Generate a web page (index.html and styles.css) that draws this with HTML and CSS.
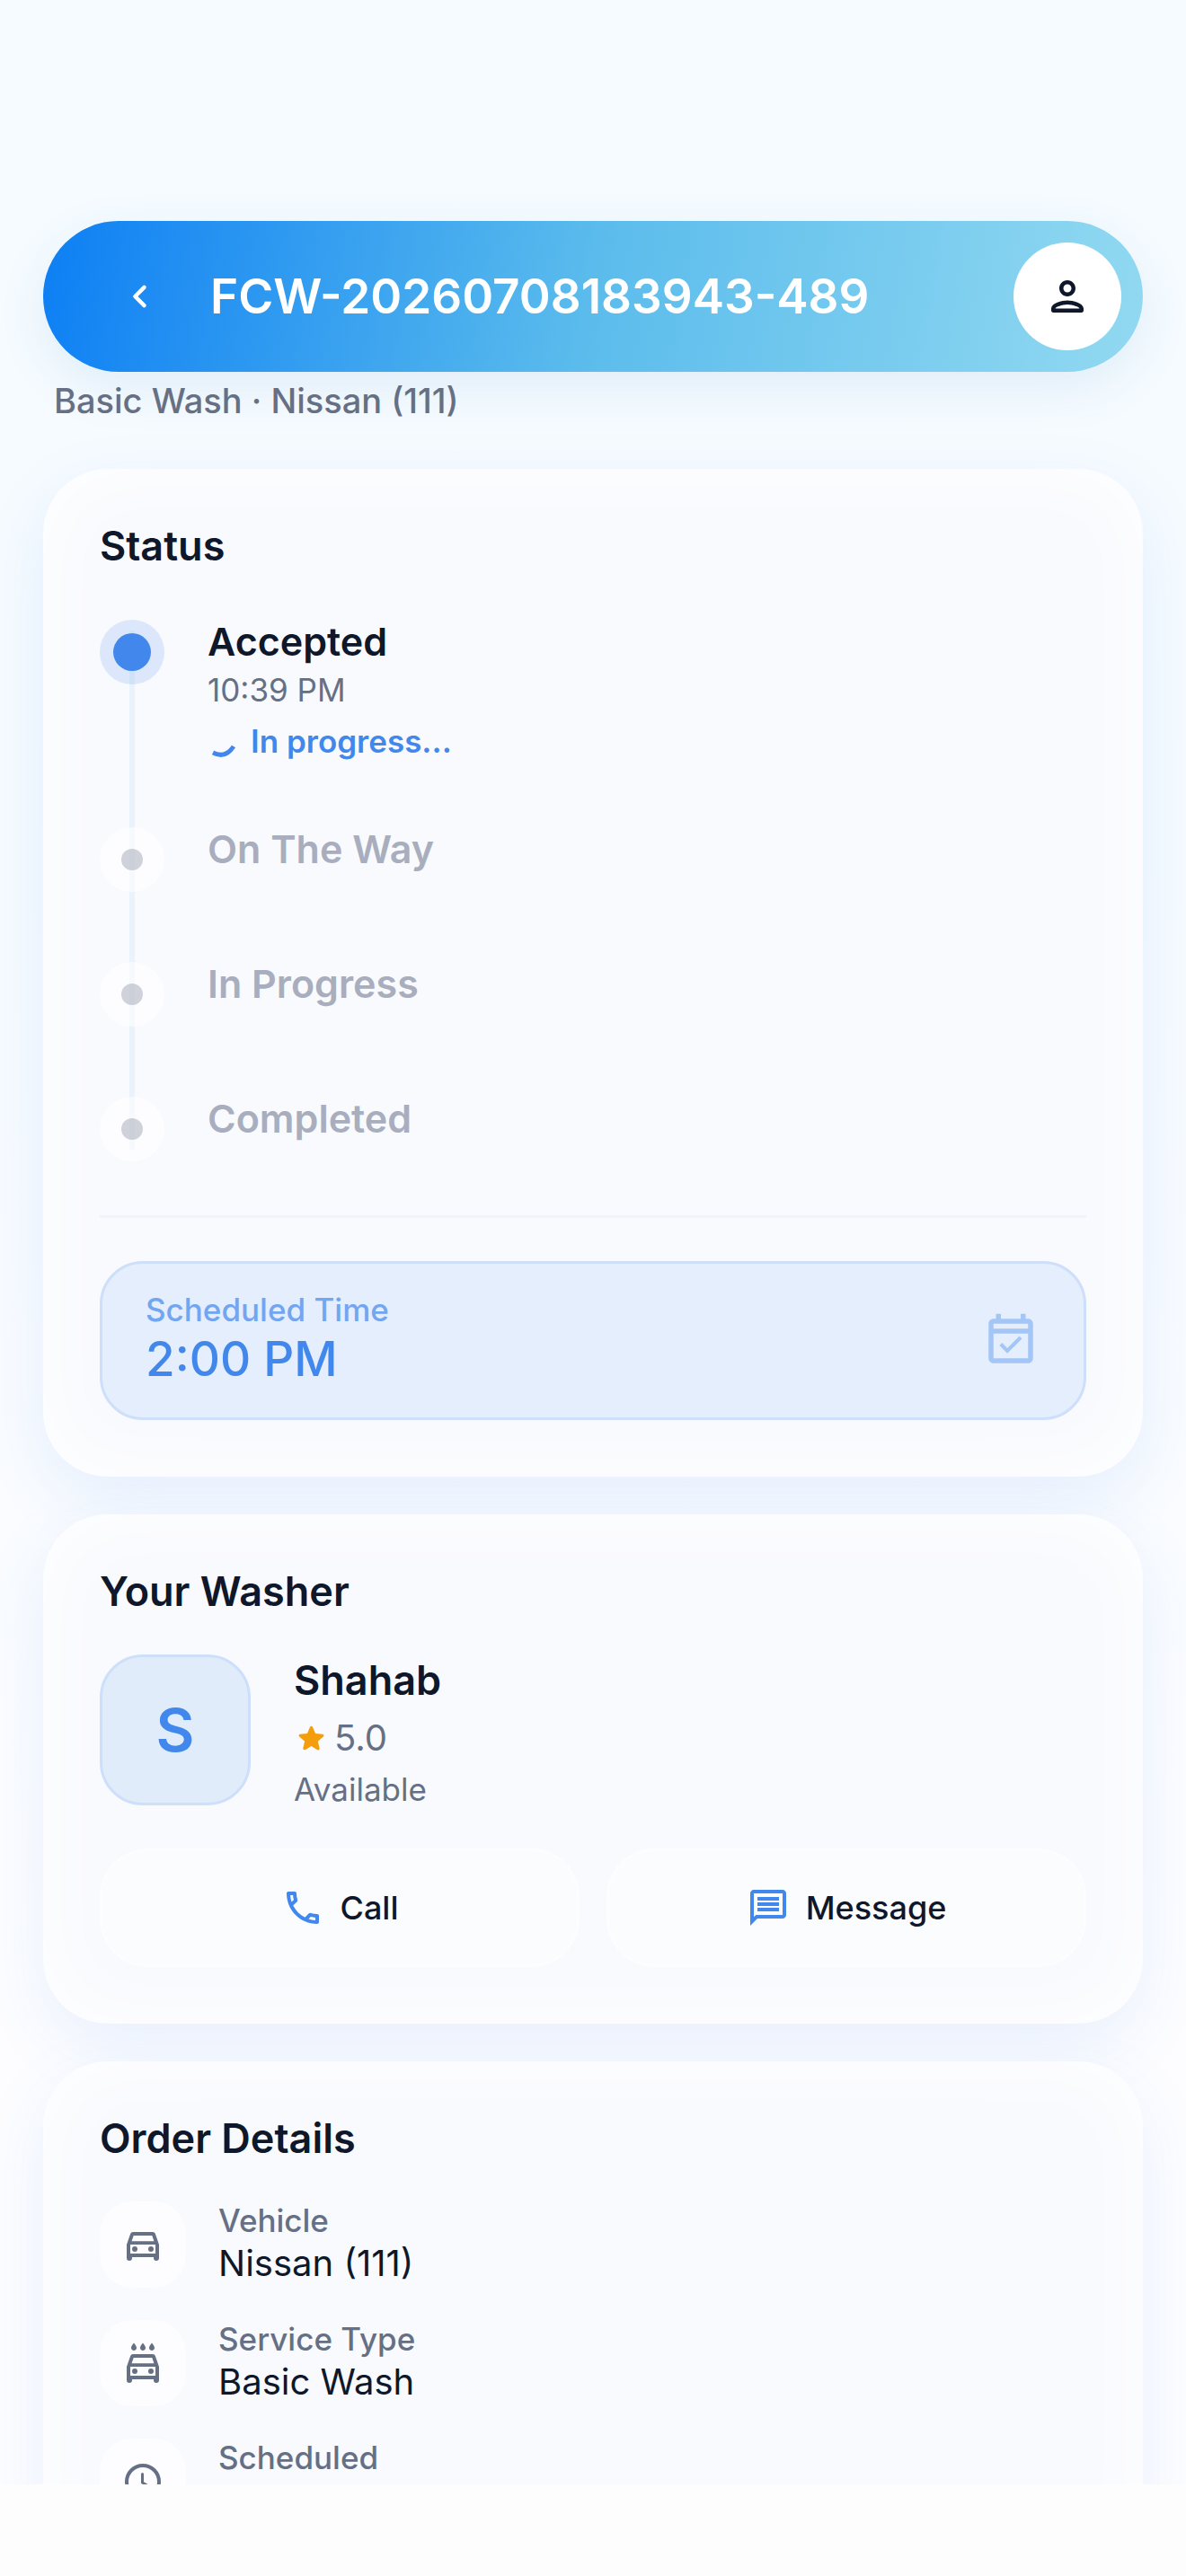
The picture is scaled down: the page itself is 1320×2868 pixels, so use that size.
FILE: index.html
```html
<!DOCTYPE html>
<html lang="en">
<head>
  <meta charset="UTF-8" />
  <meta name="viewport" content="width=device-width, initial-scale=1" />
  <title>FCW-20260708183943-489</title>
  <link rel="stylesheet" href="styles.css">
</head>
<body>

  <div class="screen">
    <!-- Header -->
    <header class="topbar">
      <button class="back-btn" type="button" aria-label="Back">
        <svg width="54" height="54" viewBox="0 0 24 24" fill="none" stroke="currentColor" stroke-width="2" stroke-linecap="round" stroke-linejoin="round"><path d="M14 7.5L9.5 12l4.500 4.500"/></svg>
      </button>
      <h1>FCW-20260708183943-489</h1>
      <button class="profile-btn" type="button" aria-label="Profile">
        <svg width="54" height="54" viewBox="0 0 24 24" fill="currentColor"><path d="M12 6c1.100 0 2 .9 2 2s-.9 2-2 2-2-.9-2-2 .9-2 2-2m0 10c2.700 0 5.800 1.290 6 2H6c.23-.72 3.310-2 6-2m0-12C9.790 4 8 5.790 8 8s1.790 4 4 4 4-1.790 4-4-1.790-4-4-4zm0 10c-2.670 0-8 1.340-8 4v1c0 .55.45 1 1 1h14c.55 0 1-.45 1-1v-1c0-2.660-5.330-4-8-4z"/></svg>
      </button>
    </header>
    <p class="subtitle">Basic Wash · Nissan (111)</p>

    <main>
      <!-- Status -->
      <section class="card">
        <h2>Status</h2>
        <ol class="timeline">
          <li class="step active">
            <span class="dot"></span>
            <div class="step-text">
              <h3>Accepted</h3>
              <time>10:39 PM</time>
              <p class="running">
                <svg width="36" height="36" viewBox="0 0 36 36" fill="none" stroke="currentColor" stroke-width="5"><path d="M6 31Q20 38 29 24"/></svg>
                In progress...
              </p>
            </div>
          </li>
          <li class="step">
            <span class="dot"></span>
            <h3>On The Way</h3>
          </li>
          <li class="step">
            <span class="dot"></span>
            <h3>In Progress</h3>
          </li>
          <li class="step">
            <span class="dot"></span>
            <h3>Completed</h3>
          </li>
        </ol>
        <hr>
        <div class="schedule">
          <div>
            <p class="schedule-label">Scheduled Time</p>
            <p class="schedule-time">2:00 PM</p>
          </div>
          <svg width="66" height="66" viewBox="0 0 24 24" fill="currentColor"><path d="M16.530 11.060L15.470 10l-4.880 4.880-2.120-2.120-1.060 1.060L10.590 17l5.940-5.940zM19 3h-1V1h-2v2H8V1H6v2H5c-1.110 0-1.990.9-1.990 2L3 19c0 1.100.89 2 2 2h14c1.100 0 2-.9 2-2V5c0-1.100-.9-2-2-2zm0 16H5V9h14v10zM5 7V5h14v2H5z"/></svg>
        </div>
      </section>

      <!-- Washer -->
      <section class="card">
        <h2>Your Washer</h2>
        <div class="washer">
          <div class="avatar">S</div>
          <div class="washer-info">
            <h3>Shahab</h3>
            <p class="rating">
              <svg width="39" height="39" viewBox="0 0 24 24" fill="currentColor"><path d="M12 17.270l4.150 2.510c.76.46 1.690-.22 1.490-1.080l-1.100-4.720 3.670-3.180c.67-.58.31-1.680-.57-1.750l-4.830-.41-1.890-4.460c-.34-.81-1.500-.81-1.840 0L9.190 8.630l-4.830.41c-.88.07-1.240 1.170-.57 1.750l3.670 3.180-1.100 4.720c-.2.86.73 1.540 1.490 1.080l4.150-2.500z"/></svg>
              5.0
            </p>
            <p class="availability">Available</p>
          </div>
        </div>
        <div class="actions">
          <button type="button">
            <svg width="48" height="48" viewBox="0 0 24 24" fill="currentColor"><path d="M6.540 5c.06.89.21 1.760.45 2.590l-1.200 1.200c-.41-1.200-.67-2.470-.76-3.790h1.510m9.860 12.020c.85.24 1.720.39 2.600.45v1.490c-1.320-.09-2.590-.35-3.800-.75l1.200-1.190M7.500 3H4c-.55 0-1 .45-1 1 0 9.390 7.610 17 17 17 .55 0 1-.45 1-1v-3.490c0-.55-.45-1-1-1-1.240 0-2.450-.2-3.570-.57-.1-.04-.21-.05-.31-.05-.26 0-.51.1-.71.29l-2.200 2.200c-2.830-1.450-5.150-3.760-6.590-6.590l2.200-2.200c.28-.28.36-.67.25-1.020C8.700 6.450 8.500 5.250 8.500 4c0-.55-.45-1-1-1z"/></svg>
            Call
          </button>
          <button type="button">
            <svg width="48" height="48" viewBox="0 0 24 24" fill="currentColor"><path d="M4 4h16v12H5.170L4 17.170V4m0-2c-1.100 0-1.990.9-1.990 2L2 22l4-4h14c1.100 0 2-.9 2-2V4c0-1.100-.9-2-2-2H4zm2 10h12v2H6v-2zm0-3h12v2H6V9zm0-3h12v2H6V6z"/></svg>
            Message
          </button>
        </div>
      </section>

      <!-- Order details -->
      <section class="card">
        <h2>Order Details</h2>
        <dl class="details">
          <div class="detail">
            <span class="detail-icon">
              <svg width="48" height="48" viewBox="0 0 24 24" fill="currentColor"><path d="M18.920 6.010C18.720 5.420 18.160 5 17.500 5h-11c-.66 0-1.210.42-1.420 1.010L3 12v7.500a1.500 1.500 0 0 0 3 0V19h12v.5a1.500 1.500 0 0 0 3 0V12l-2.080-5.990zM6.850 7h10.290l1.080 3.110H5.770L6.850 7zM19 17H5v-5h14v5z"/><circle cx="7.500" cy="14.500" r="1.500"/><circle cx="16.500" cy="14.500" r="1.500"/></svg>
            </span>
            <dt>Vehicle</dt>
            <dd>Nissan (111)</dd>
          </div>
          <div class="detail">
            <span class="detail-icon">
              <svg width="48" height="48" viewBox="0 0 24 24" fill="currentColor"><path d="M18.920 8.010C18.720 7.420 18.160 7 17.500 7h-11c-.66 0-1.210.42-1.420 1.010L3 14v7.500a1.500 1.500 0 0 0 3 0V21h12v.5a1.500 1.500 0 0 0 3 0V14l-2.080-5.990zM6.850 9h10.290l1.080 3.110H5.770L6.850 9zM19 19H5v-5h14v5z"/><circle cx="7.500" cy="16.500" r="1.500"/><circle cx="16.500" cy="16.500" r="1.500"/><path d="M7 5c.83 0 1.500-.67 1.500-1.500C8.500 2.500 7 .8 7 .8S5.500 2.500 5.500 3.500C5.500 4.330 6.170 5 7 5zM12 5c.83 0 1.500-.67 1.500-1.500 0-1-1.500-2.700-1.500-2.700s-1.500 1.700-1.500 2.700c0 .83.67 1.500 1.500 1.500zM17 5c.83 0 1.500-.67 1.500-1.500 0-1-1.500-2.700-1.500-2.700s-1.500 1.700-1.500 2.700c0 .83.67 1.500 1.500 1.500z"/></svg>
            </span>
            <dt>Service Type</dt>
            <dd>Basic Wash</dd>
          </div>
          <div class="detail">
            <span class="detail-icon">
              <svg width="48" height="48" viewBox="0 0 24 24" fill="none" stroke="currentColor" stroke-width="2" stroke-linecap="round"><circle cx="12" cy="12" r="9"/><path stroke-width="1.500" d="M11.750 7.750V12.500l3.750 2.300"/></svg>
            </span>
            <dt>Scheduled</dt>
          </div>
        </dl>
      </section>
    </main>
  </div>

  <footer class="safe-area"></footer>

</body>
</html>
```
FILE: styles.css
```css
* {
  margin: 0;
  padding: 0;
  box-sizing: border-box;
}

:root {
  --ink: #0f172a;
  --muted: #667085;
  --blue: #4288ec;
}

body {
  display: flex;
  flex-direction: column;
  height: 100vh;
  overflow: hidden;
  font-family: Inter, "Liberation Sans", sans-serif;
  color: var(--ink);
  background: #fdfdfe;
}

svg {
  flex-shrink: 0;
}

button {
  font: inherit;
  color: inherit;
  border: none;
  cursor: pointer;
}

.screen {
  flex: 1;
  min-height: 0;
  overflow: hidden;
  padding: 246px 48px 0;
  background: linear-gradient(180deg, #f5fbff 0%, #f7fbff 40%, #fdfdff 80%);
}

/* Header */
.topbar {
  display: flex;
  align-items: center;
  height: 168px;
  padding: 0 24px 0 48px;
  border-radius: 84px;
  background: linear-gradient(100deg, #0d7ff4 0%, #5bbcec 50%, #92d9f1 100%);
  box-shadow: 0 18px 54px rgba(50, 120, 190, 0.1);
  color: #fff;
}

.topbar h1 {
  flex: 1;
  margin-left: 18px;
  font-size: 53px;
  font-weight: 600;
  line-height: 60px;
}

.back-btn,
.profile-btn {
  display: flex;
  align-items: center;
  justify-content: center;
  width: 120px;
  height: 120px;
  border-radius: 50%;
  background: none;
}

.profile-btn {
  background: #fff;
  color: var(--ink);
}

.subtitle {
  padding: 8px 12px 52px;
  font-size: 38px;
  font-weight: 500;
  line-height: 48px;
  color: var(--muted);
}

/* Cards */
main {
  display: flex;
  flex-direction: column;
  gap: 42px;
}

.card {
  padding: 63px;
  border-radius: 72px;
  background: #f9fafe;
  box-shadow: 0 24px 72px rgba(66, 136, 236, 0.11), inset 0 0 90px #fff;
}

.card h2 {
  font-size: 45px;
  font-weight: 600;
  line-height: 45px;
}

/* Timeline */
.timeline {
  position: relative;
  display: flex;
  flex-direction: column;
  gap: 75px;
  margin-top: 60px;
  list-style: none;
}

.timeline::before {
  content: "";
  position: absolute;
  top: 12px;
  bottom: 15px;
  left: 33px;
  width: 6px;
  border-radius: 3px;
  background: #eaf3fb;
}

.step {
  position: relative;
  display: flex;
  align-items: flex-start;
  gap: 48px;
  min-height: 75px;
}

.step h3 {
  font-size: 43px;
  font-weight: 600;
  line-height: 48px;
  color: #a8aebd;
}

.dot {
  display: flex;
  align-items: center;
  justify-content: center;
  width: 72px;
  height: 72px;
  border-radius: 50%;
  background: rgba(255, 255, 255, 0.6);
}

.dot::before {
  content: "";
  width: 24px;
  height: 24px;
  border-radius: 50%;
  background: rgba(102, 112, 133, 0.3);
}

.active .dot {
  background: rgba(66, 136, 236, 0.16);
}

.active .dot::before {
  width: 42px;
  height: 42px;
  background: var(--blue);
}

.active h3 {
  color: var(--ink);
}

.step time {
  display: block;
  margin-top: 9px;
  font-size: 35px;
  line-height: 42px;
  color: var(--muted);
}

.running {
  display: flex;
  align-items: center;
  gap: 12px;
  margin-top: 15px;
  font-size: 35px;
  font-weight: 600;
  line-height: 42px;
  color: var(--blue);
}

hr {
  height: 3px;
  margin: 57px 0 48px;
  border: none;
  background: #edf4fb;
}

.schedule {
  display: flex;
  align-items: center;
  justify-content: space-between;
  padding: 33px 48px;
  border: 3px solid #cddffa;
  border-radius: 48px;
  background: #e4eefc;
  color: #a4c6f6;
}

.schedule-label {
  font-size: 35px;
  font-weight: 500;
  line-height: 36px;
  color: #72a6f1;
}

.schedule-time {
  margin-top: 6px;
  font-size: 53px;
  font-weight: 500;
  line-height: 63px;
  color: var(--blue);
}

/* Washer */
.washer {
  display: flex;
  align-items: flex-start;
  gap: 48px;
  margin-top: 48px;
}

.avatar {
  display: flex;
  align-items: center;
  justify-content: center;
  width: 168px;
  height: 168px;
  border: 3px solid #cddffa;
  border-radius: 48px;
  background: #e1ecfb;
  font-size: 66px;
  font-weight: 600;
  color: var(--blue);
}

.washer-info h3 {
  font-size: 45px;
  font-weight: 600;
  line-height: 57px;
}

.rating {
  display: flex;
  align-items: center;
  gap: 6px;
  margin: 12px 0 9px;
  font-size: 40px;
  line-height: 48px;
  color: var(--muted);
}

.rating svg {
  color: #f59e0b;
}

.availability {
  font-size: 35px;
  line-height: 48px;
  color: var(--muted);
}

.actions {
  display: grid;
  grid-template-columns: 1fr 1fr;
  gap: 30px;
  margin-top: 42px;
}

.actions button {
  display: flex;
  align-items: center;
  justify-content: center;
  gap: 18px;
  height: 132px;
  border: 3px solid #fcfdff;
  border-radius: 54px;
  background: #fbfcfe;
  font-size: 36px;
  font-weight: 500;
}

.actions svg {
  color: var(--blue);
}

/* Order details */
.details {
  display: flex;
  flex-direction: column;
  gap: 36px;
  margin-top: 48px;
}

.detail {
  display: grid;
  grid-template-columns: 96px 1fr;
  grid-template-rows: 42px 48px;
  gap: 3px 36px;
  min-height: 96px;
}

.detail-icon {
  display: flex;
  align-items: center;
  justify-content: center;
  grid-row: span 2;
  height: 96px;
  border-radius: 36px;
  background: #fdfdff;
  color: var(--muted);
}

.detail dt {
  font-size: 35px;
  font-weight: 500;
  line-height: 42px;
  color: var(--muted);
}

.detail dd {
  font-size: 40px;
  line-height: 48px;
}

.safe-area {
  height: 102px;
}
```
